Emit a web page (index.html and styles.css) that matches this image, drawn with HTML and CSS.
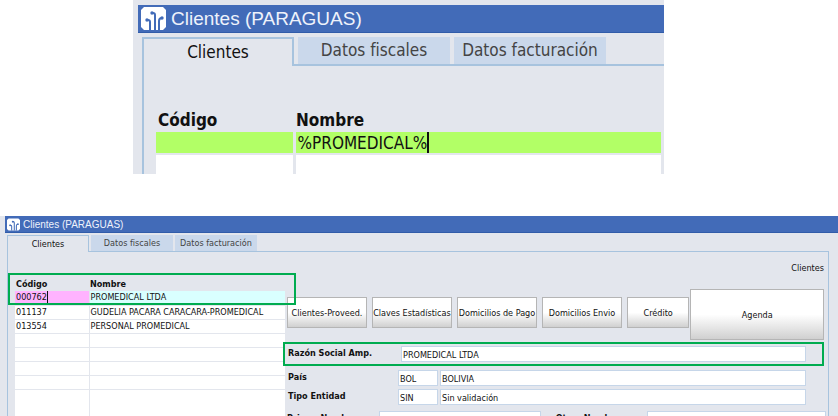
FILE: index.html
```html
<!DOCTYPE html>
<html lang="es">
  <head>
    <meta charset="UTF-8" />
    <meta name="viewport" content="width=device-width, initial-scale=1.0" />
    <title>Clientes (PARAGUAS)</title>
    <link rel="stylesheet" href="styles.css" />
  </head>
  <body>
    <section class="window window-search">
      <header class="title-bar">
        <svg class="logo" viewBox="0 0 25 23">
          <path fill="#fff" d="M3 0h19l3 3v17l-3 3H3l-3-3V3z" />
          <g fill="none" stroke="#426bb8" stroke-width="2">
            <path d="M5 13h2q2 0 2 2v8M11 6h1q2 0 2 2v15M18 23v-9q0-3 3-3" />
          </g>
          <g fill="#426bb8">
            <circle cx="6" cy="13" r="1.7" />
            <circle cx="11" cy="6" r="1.7" />
            <circle cx="21" cy="11" r="1.7" />
          </g>
        </svg>
        <span>Clientes (PARAGUAS)</span>
      </header>
      <nav class="tabs">
        <button class="tab active">Clientes</button>
        <button class="tab">Datos fiscales</button>
        <button class="tab">Datos facturación</button>
      </nav>
      <div class="panel">
        <table class="grid">
          <colgroup><col class="col-code" /><col /></colgroup>
          <thead>
            <tr><th>Código</th><th>Nombre</th></tr>
          </thead>
          <tbody>
            <tr class="query"><td></td><td><input class="cell-input" type="text" aria-label="Nombre" value="%PROMEDICAL%" /></td></tr>
            <tr><td></td><td></td></tr>
          </tbody>
        </table>
      </div>
    </section>

    <section class="window window-result">
      <header class="title-bar">
        <svg class="logo" viewBox="0 0 25 23">
          <path fill="#fff" d="M3 0h19l3 3v17l-3 3H3l-3-3V3z" />
          <g fill="none" stroke="#426bb8" stroke-width="2">
            <path d="M5 13h2q2 0 2 2v8M11 6h1q2 0 2 2v15M18 23v-9q0-3 3-3" />
          </g>
          <g fill="#426bb8">
            <circle cx="6" cy="13" r="1.7" />
            <circle cx="11" cy="6" r="1.7" />
            <circle cx="21" cy="11" r="1.7" />
          </g>
        </svg>
        <span>Clientes (PARAGUAS)</span>
      </header>
      <nav class="tabs">
        <button class="tab active">Clientes</button>
        <button class="tab">Datos fiscales</button>
        <button class="tab">Datos facturación</button>
      </nav>
      <div class="panel">
        <div class="list">
          <table class="grid">
            <colgroup><col class="col-code" /><col /></colgroup>
            <thead>
              <tr><th>Código</th><th>Nombre</th></tr>
            </thead>
            <tbody>
              <tr class="selected"><td><input class="cell-input" type="text" aria-label="Código" value="000762" /></td><td>PROMEDICAL LTDA</td></tr>
              <tr><td>011137</td><td>GUDELIA PACARA CARACARA-PROMEDICAL</td></tr>
              <tr><td>013554</td><td>PERSONAL PROMEDICAL</td></tr>
              <tr><td></td><td></td></tr>
              <tr><td></td><td></td></tr>
              <tr><td></td><td></td></tr>
              <tr><td></td><td></td></tr>
              <tr class="rest"><td></td><td></td></tr>
            </tbody>
          </table>
          <div class="mark mark-list"></div>
        </div>
        <div class="detail">
          <div class="section-name">Clientes</div>
          <div class="actions">
            <button class="action">Clientes-Proveed.</button>
            <button class="action">Claves Estadísticas</button>
            <button class="action">Domicilios de Pago</button>
            <button class="action">Domicilios Envio</button>
            <button class="action short">Crédito</button>
            <button class="action big">Agenda</button>
          </div>
          <div class="field marked">
            <label for="razon">Razón Social Amp.</label>
            <input id="razon" type="text" value="PROMEDICAL LTDA" />
            <div class="mark mark-field"></div>
          </div>
          <div class="field">
            <label for="pais">País</label>
            <input id="pais" class="code" type="text" value="BOL" />
            <input type="text" aria-label="Nombre del país" value="BOLIVIA" />
          </div>
          <div class="field">
            <label for="tipo">Tipo Entidad</label>
            <input id="tipo" class="code" type="text" value="SIN" />
            <input type="text" aria-label="Descripción de la entidad" value="Sin validación" />
          </div>
          <div class="field names">
            <label for="primer">Primer Nombre</label>
            <input id="primer" type="text" />
            <label for="otros">Otros Nombres</label>
            <input id="otros" type="text" />
          </div>
        </div>
      </div>
    </section>
  </body>
</html>
```
FILE: styles.css
```css
* {
  box-sizing: border-box;
}
body {
  margin: 0;
  height: 100vh;
  overflow: hidden;
  display: flex;
  flex-direction: column;
  gap: 42px;
  background: #fff;
  color: #111;
  font-family: "DejaVu Sans Condensed", "DejaVu Sans", sans-serif;
}
button,
input {
  font: inherit;
  color: inherit;
  border-radius: 0;
  padding: 0;
  margin: 0;
}
.window {
  display: flex;
  flex-direction: column;
  background: #e3e6ed;
}
.window-search {
  flex: none;
  margin: 0 174px 0 133px;
  padding: 5px 0 0 5px;
  font-size: 17px;
}
.window-result {
  flex: 1;
  min-height: 0;
  padding-left: 5px;
  font-size: 9px;
}

/* barra de título */
.title-bar {
  flex: none;
  display: flex;
  align-items: center;
  background: #426bb8;
  border-bottom: 1px solid #315ca9;
  color: #eef2fb;
  font-family: "Liberation Sans", Arial, sans-serif;
}
.window-search .title-bar {
  height: 28px;
  padding-left: 3px;
  gap: 5px;
  font-size: 19px;
}
.window-result .title-bar {
  height: 17px;
  padding-left: 2px;
  gap: 3px;
  font-size: 10px;
}
.logo {
  width: 25px;
  height: 23px;
}
.window-result .logo {
  width: 13px;
  height: 13px;
}

/* pestañas */
.tabs {
  flex: none;
  display: flex;
}
.window-search .tabs {
  height: 31px;
  padding: 4px 0 0 4px;
  gap: 4px;
}
.window-result .tabs {
  height: 18px;
  padding: 2px 0 0 2px;
  gap: 2px;
}
.tab {
  width: 152px;
  border: 0;
  background: #cad8eb;
  color: #444;
  line-height: 1;
  white-space: nowrap;
}
.window-result .tab {
  width: 82px;
}
.tab.active {
  position: relative;
  border: 2px solid #a7c3de;
  border-bottom: 0;
  margin-bottom: -2px;
  background: #e3e6ed;
  color: #111;
}
.window-result .tab.active {
  border-width: 1px;
  border-bottom: 0;
  margin-bottom: -1px;
}
.window-search .panel {
  margin-left: 4px;
  padding: 42px 3px 0 12px;
  border: 2px solid #a7c3de;
  border-width: 2px 0 0 2px;
}
.window-result .panel {
  flex: 1;
  min-height: 0;
  display: flex;
  margin: 0 9px 0 2px;
  border: 1px solid #a7c3de;
  border-bottom: 0;
}

/* tablas */
.grid {
  width: 100%;
  table-layout: fixed;
  border-collapse: collapse;
}
.grid th {
  padding: 0 0 0 1px;
  text-align: left;
  font-weight: bold;
}
.grid td {
  padding: 0 1px;
  background: #fff;
  border-bottom: 1px solid #e3e6ed;
  white-space: nowrap;
}
.window-search .grid th {
  height: 24px;
  padding: 0 0 0 2px;
  line-height: 22px;
}
.window-search .grid td {
  height: 22px;
  padding-left: 2px;
  border-bottom-width: 2px;
}
.window-search .grid tbody tr:last-child td {
  height: 20px;
  border-bottom: 0;
}
.window-search .col-code {
  width: 138px;
}
.window-search .grid td:first-child {
  border-right: 3px solid #e3e6ed;
}
.window-search .query td {
  background: #b2ff66;
}
.window-result .grid th,
.window-result .grid td {
  height: 14px;
  line-height: 13px;
}
.window-result .col-code {
  width: 74px;
}
.window-result .grid td:first-child {
  border-right: 1px solid #e3e6ed;
}
.window-result .selected td {
  background: #d9ffff;
}
.window-result .selected td:first-child {
  background: #ffb3ff;
}
.window-result .rest td {
  height: 40px;
}
.cell-input {
  display: block;
  field-sizing: content;
  background: none;
  border: 0;
  border-right: 2px solid #111;
}
.window-search .cell-input {
  height: 21px;
}
.window-result .cell-input {
  height: 13px;
  border-right-width: 1px;
}
.list {
  position: relative;
  flex: none;
  width: 277px;
  padding: 25px 0 0 7px;
}

/* recuadros verdes */
.mark {
  position: absolute;
  border: 2px solid #00ac50;
  pointer-events: none;
}
.mark-list {
  top: 21px;
  left: 0;
  right: -11px;
  height: 32px;
}
.mark-field {
  inset: -4px -18px -4px -5px;
}

/* ficha */
.detail {
  flex: 1;
  min-width: 0;
  padding: 10px 4px 0 2px;
}
.section-name {
  height: 27px;
  text-align: right;
  line-height: 13px;
}
.actions {
  display: flex;
  align-items: flex-start;
  gap: 5px;
  height: 57px;
}
.action {
  flex: 80 1 0;
  min-width: 0;
  height: 31px;
  margin-top: 8px;
  border: 1px solid #b5b5b5;
  background: linear-gradient(#fff 50%, #d0d0d0);
  white-space: nowrap;
}
.action.short {
  flex-grow: 62;
}
.action.big {
  flex-grow: 135;
  height: 51px;
  margin: 0 0 0 -4px;
}
.field {
  position: relative;
  display: flex;
  gap: 2px;
  margin: 0 18px 3px 1px;
}
.field.marked {
  margin-bottom: 8px;
}
.field label {
  flex: none;
  width: 108px;
  line-height: 14px;
  font-weight: bold;
}
.field.marked label {
  width: 111px;
}
.field input {
  flex: 1;
  min-width: 0;
  height: 16px;
  padding: 1px 0 0 1px;
  border: 1px solid #c6d6e9;
  background: #fff;
}
.field .code {
  flex: none;
  width: 40px;
}
.field.names {
  margin: 6px -2px 0 0;
}
.names label {
  width: 90px;
}
.names input {
  flex-grow: 9;
}
.names input + label {
  padding-left: 13px;
  width: 102px;
}
.names label + input:last-child {
  flex-grow: 10;
}
```
